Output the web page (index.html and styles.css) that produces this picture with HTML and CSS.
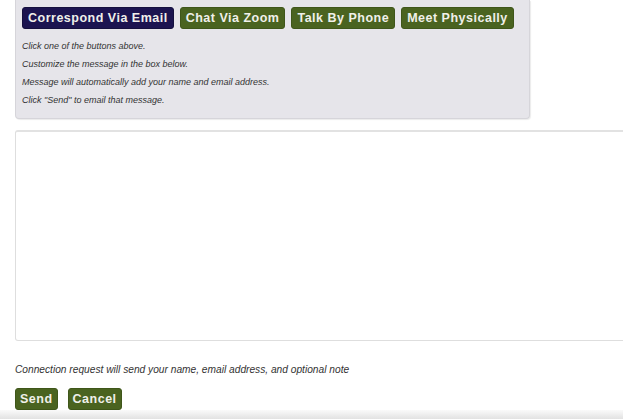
FILE: index.html
```html
<!DOCTYPE html>
<html lang="en">
<head>
    <meta charset="UTF-8">
    <title>Connect</title>
    <link rel="stylesheet" href="styles.css">
</head>
<body>

    <div class="page">
        <!-- Contact method panel -->
        <div class="panel">
            <div class="methods">
                <button class="btn btn-active">Correspond Via Email</button>
                <button class="btn">Chat Via Zoom</button>
                <button class="btn">Talk By Phone</button>
                <button class="btn">Meet Physically</button>
            </div>
            <ul class="steps">
                <li>Click one of the buttons above.</li>
                <li>Customize the message in the box below.</li>
                <li>Message will automatically add your name and email address.</li>
                <li>Click "Send" to email that message.</li>
            </ul>
        </div>

        <div class="note-wrap">
            <textarea class="note"></textarea>
        </div>

        <p class="hint">Connection request will send your name, email address, and optional note</p>

        <div class="actions">
            <button class="btn">Send</button>
            <button class="btn">Cancel</button>
        </div>
    </div>

    <div class="footer-shade"></div>

</body>
</html>
```

FILE: styles.css
```css
* {
    margin: 0;
    padding: 0;
    box-sizing: border-box;
}

html, body {
    height: 100%;
    overflow: hidden;
}

body {
    font-family: 'Liberation Sans', Arial, sans-serif;
    background: #fff;
    position: relative;
}

.page {
    padding-left: 15px;
}

/* Panel */
.panel {
    width: 515px;
    background: #e6e5ea;
    border: 1px solid #d6d5da;
    border-top: none;
    border-radius: 0 0 4px 4px;
    box-shadow: 1px 1px 1px rgba(0, 0, 0, 0.08);
    padding: 7px 6px 9px 6px;
}

.methods {
    display: flex;
    gap: 6px;
}

.btn {
    font-family: 'Liberation Sans', Arial, sans-serif;
    font-size: 12.5px;
    font-weight: bold;
    letter-spacing: 0.5px;
    white-space: nowrap;
    flex-shrink: 0;
    color: #f0f0ea;
    background: #4a6320;
    border: 1px solid #3f561a;
    border-radius: 3px;
    height: 22px;
    padding: 0 5px;
    cursor: pointer;
}

.btn-active {
    background: #1c1450;
    border-color: #15103e;
}

.steps {
    list-style: none;
    margin-top: 8px;
}

.steps li {
    font-size: 9px;
    font-style: italic;
    color: #333;
    line-height: 18px;
}

/* Note box */
.note-wrap {
    overflow: hidden;
    margin-top: 11px;
}

.note {
    display: block;
    width: 640px;
    height: 211px;
    border: 1px solid #dedede;
    border-top: 2px solid #e2e2e2;
    border-radius: 3px;
    resize: none;
    background: #fff;
}

.hint {
    font-size: 10.2px;
    font-style: italic;
    color: #333;
    margin-top: 23px;
}

.actions {
    display: flex;
    gap: 10px;
    margin-top: 13px;
}

.actions .btn {
    padding: 0 4px;
}

.footer-shade {
    position: absolute;
    left: 0;
    right: 0;
    bottom: 0;
    height: 9px;
    background: linear-gradient(to bottom, #fafafa, #e2e2e2);
}
```
